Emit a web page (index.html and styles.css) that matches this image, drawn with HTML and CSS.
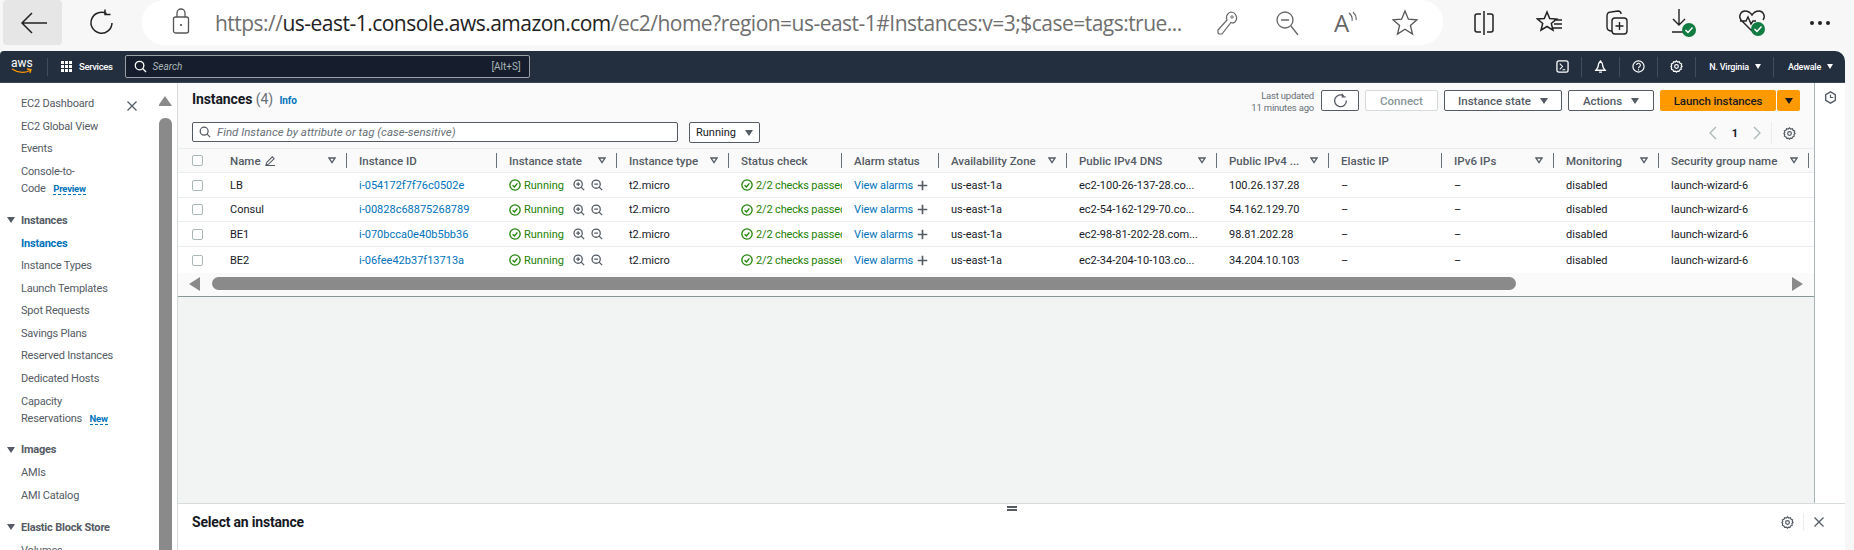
FILE: index.html
```html
<!DOCTYPE html>
<html lang="en">
<head>
  <meta charset="UTF-8" />
  <title>Instances | EC2 | us-east-1</title>
  <link rel="stylesheet" href="styles.css">
</head>
<body>
  <svg class="defs" width="0" height="0">
    <symbol id="ok" viewBox="0 0 14 14"><circle cx="7" cy="7" r="6" fill="none" stroke="currentColor" stroke-width="1.500"/><path d="M4.200 7.200l2.100 2.100 3.500-4.200" fill="none" stroke="currentColor" stroke-width="1.500"/></symbol>
    <symbol id="zin" viewBox="0 0 14 14"><circle cx="6" cy="6" r="4.800" fill="none" stroke="currentColor" stroke-width="1.500"/><path d="M9.500 9.500L13 13M3.800 6h4.400M6 3.800v4.400" fill="none" stroke="currentColor" stroke-width="1.500"/></symbol>
    <symbol id="zout" viewBox="0 0 14 14"><circle cx="6" cy="6" r="4.800" fill="none" stroke="currentColor" stroke-width="1.500"/><path d="M9.500 9.500L13 13M3.800 6h4.400" fill="none" stroke="currentColor" stroke-width="1.500"/></symbol>
    <symbol id="plus" viewBox="0 0 12 12"><path d="M6 .8v10.400M.8 6h10.400" fill="none" stroke="currentColor" stroke-width="1.800"/></symbol>
    <symbol id="sort" viewBox="0 0 8 7"><path d="M1 1h6L4 5.600z" fill="none" stroke="currentColor" stroke-width="1.300"/></symbol>
    <symbol id="gear" viewBox="0 0 14 14"><path d="M7 1l1.300 1.200 1.800-.3.700 1.700 1.700.7-.3 1.800L13 7l-1.200 1.100.3 1.800-1.700.7-.7 1.700-1.800-.3L7 13l-1.300-1-1.800.3-.7-1.700-1.700-.7.3-1.800L1 7l.8-.9-.3-1.800 1.700-.7.7-1.700 1.800.3z" fill="none" stroke="currentColor" stroke-width="1.300"/><circle cx="7" cy="7" r="2" fill="none" stroke="currentColor" stroke-width="1.300"/></symbol>
    <symbol id="close" viewBox="0 0 12 12"><path d="M1.500 1.500l9 9M10.500 1.500l-9 9" fill="none" stroke="currentColor" stroke-width="1.300"/></symbol>
  </svg>

  <header class="browser">
    <button class="back">
      <svg width="28" height="24" viewBox="0 0 28 24"><path d="M27 12H3M12 2L2 12l10 10" fill="none" stroke="#222" stroke-width="1.500"/></svg>
    </button>
    <svg class="reload" width="26" height="28" viewBox="0 0 26 28"><path d="M17.500 4.500A10.500 10.500 0 1 0 23 14M16 .5v5h5.500" fill="none" stroke="#222" stroke-width="1.500"/></svg>
    <div class="urlbar">
      <svg class="lock" width="18" height="28" viewBox="0 0 18 28"><rect x="1.500" y="10" width="15" height="16" rx="2" fill="none" stroke="#555" stroke-width="1.300"/><path d="M5 10V6a4 4 0 0 1 8 0v4" fill="none" stroke="#555" stroke-width="1.300"/><circle cx="9" cy="18" r="1.100" fill="#555"/></svg>
      <div class="url"><span>https://</span><b>us-east-1.console.aws.amazon.com</b><span>/ec2/home?region=us-east-1#Instances:v=3;$case=tags:true...</span></div>
      <div class="url-tools">
        <svg width="24" height="28" viewBox="0 0 24 28"><path d="M15 3a6 6 0 0 1 4 10l-2 1-2-.5L6 25H3l-1-1v-3l9-10-.500-2A6 6 0 0 1 15 3z" fill="none" stroke="#666" stroke-width="1.200"/><circle cx="16" cy="8" r="1.200" fill="none" stroke="#666"/></svg>
        <svg width="24" height="28" viewBox="0 0 24 28"><circle cx="10" cy="11" r="8" fill="none" stroke="#666" stroke-width="1.300"/><path d="M16 17l7 9M6 11h8" fill="none" stroke="#666" stroke-width="1.300"/></svg>
        <span class="read">A<svg width="10" height="14" viewBox="0 0 10 14"><path d="M2 2q4 3 3 8M6 1q4 4 3 8" fill="none" stroke="#666" stroke-width="1.100"/></svg></span>
        <svg width="26" height="28" viewBox="0 0 26 28"><path d="M13 2l3.400 8.200 8.600.6-6.600 5.600 2.100 8.600L13 20.300 5.500 25l2.100-8.600L1 10.800l8.600-.6z" fill="none" stroke="#555" stroke-width="1.300"/></svg>
      </div>
    </div>
    <div class="browser-tools">
      <svg width="24" height="24" viewBox="0 0 24 24"><path d="M9 3H5a2 2 0 0 0-2 2v14a2 2 0 0 0 2 2h4M15 3h4a2 2 0 0 1 2 2v14a2 2 0 0 1-2 2h-4M12 0v24" fill="none" stroke="#222" stroke-width="1.500"/></svg>
      <svg width="28" height="26" viewBox="0 0 28 26"><path d="M11 2l2.700 6.500 6.800.500-5.200 4.400 1.700 6.800L11 16.500 5 20.200l1.700-6.800L1.500 9l6.800-.500zM18 10h8M18 14h8M16 18h10" fill="none" stroke="#222" stroke-width="1.500"/></svg>
      <svg width="26" height="28" viewBox="0 0 26 28"><path d="M8 22c-3 0-5-1-5-4V7c0-2 1-4 4-4l7-1c2 0 3 1 3 3" fill="none" stroke="#222" stroke-width="1.400"/><rect x="8" y="9" width="15" height="16" rx="3" fill="none" stroke="#222" stroke-width="1.400"/><path d="M15.500 13v8M11.500 17h8" fill="none" stroke="#222" stroke-width="1.400"/></svg>
      <svg width="28" height="30" viewBox="0 0 28 30"><path d="M9 1v16M3 11l6 6 6-6M2 24h13" fill="none" stroke="#222" stroke-width="1.400"/><circle cx="19" cy="22" r="7" fill="#107c41"/><path d="M15.500 22l2.500 2.500 4.500-5" fill="none" stroke="#fff" stroke-width="1.500"/></svg>
      <svg width="30" height="30" viewBox="0 0 30 30"><path d="M14 23L3 12c-3-4 0-9 4-9 3 0 5 1 7 4 2-3 4-4 7-4 4 0 7 5 4 9M2 13h6l2-4 3 7 2-3h3" fill="none" stroke="#222" stroke-width="1.400"/><circle cx="20" cy="21" r="7" fill="#107c41"/><path d="M16.500 21l2.500 2.500 4.500-5" fill="none" stroke="#fff" stroke-width="1.500"/></svg>
      <span class="dots"><i></i><i></i><i></i></span>
    </div>
  </header>

  <nav class="topnav">
    <div class="aws-logo">aws
      <svg width="22" height="7" viewBox="0 0 22 7"><path d="M1 1q9 6 18 1.500M16 1l4 .5-1 3.500" fill="none" stroke="#f90" stroke-width="1.300"/></svg>
    </div>
    <span class="nav-sep"></span>
    <span class="grid-dots"><i></i><i></i><i></i><i></i><i></i><i></i><i></i><i></i><i></i></span>
    <span class="nav-label services">Services</span>
    <div class="nav-search">
      <svg width="13" height="13" viewBox="0 0 14 14"><circle cx="6" cy="6" r="4.600" fill="none" stroke="#fff" stroke-width="1.400"/><path d="M9.500 9.500L13 13" stroke="#fff" stroke-width="1.400"/></svg>
      <em>Search</em>
      <span>[Alt+S]</span>
    </div>
    <div class="nav-right">
      <span class="nav-item"><svg width="13" height="13" viewBox="0 0 14 14"><rect x="1" y="1" width="12" height="12" rx="2" fill="none" stroke="#fff" stroke-width="1.400"/><path d="M4 4l3 3-3 3M7 10.500h3" fill="none" stroke="#fff" stroke-width="1.100"/></svg></span>
      <span class="nav-item"><svg width="13" height="14" viewBox="0 0 14 15"><path d="M7 1c-2 2-2.500 3-2.500 5.500 0 2-1.500 3-2.500 4.500h10c-1-1.500-2.500-2.500-2.500-4.500C9.500 4 9 3 7 1zM5.500 13h3" fill="none" stroke="#fff" stroke-width="1.500"/></svg></span>
      <span class="nav-item"><svg width="13" height="13" viewBox="0 0 14 14"><circle cx="7" cy="7" r="6" fill="none" stroke="#fff" stroke-width="1.300"/><path d="M5 5.500a2 2 0 1 1 3 1.700c-.8.500-1 1-1 1.800M7 10v1.200" fill="none" stroke="#fff" stroke-width="1.200"/></svg></span>
      <span class="nav-item"><svg width="13" height="13"><use href="#gear"/></svg></span>
      <span class="nav-item region">N. Virginia<i class="caret"></i></span>
      <span class="nav-item user">Adewale<i class="caret"></i></span>
    </div>
  </nav>

  <div class="console">
    <aside class="sidebar">
      <svg class="side-close"><use href="#close"/></svg>
      <a class="side-link">EC2 Dashboard</a>
      <a class="side-link">EC2 Global View</a>
      <a class="side-link">Events</a>
      <a class="side-link two-line">Console-to-<br>Code <span class="tag">Preview</span></a>
      <h4 class="side-head">Instances</h4>
      <a class="side-link active">Instances</a>
      <a class="side-link">Instance Types</a>
      <a class="side-link">Launch Templates</a>
      <a class="side-link">Spot Requests</a>
      <a class="side-link">Savings Plans</a>
      <a class="side-link">Reserved Instances</a>
      <a class="side-link">Dedicated Hosts</a>
      <a class="side-link two-line">Capacity<br>Reservations <span class="tag">New</span></a>
      <h4 class="side-head">Images</h4>
      <a class="side-link">AMIs</a>
      <a class="side-link">AMI Catalog</a>
      <h4 class="side-head">Elastic Block Store</h4>
      <a class="side-link">Volumes</a>
    </aside>
    <div class="side-scroll">
      <i class="arrow-up"></i>
      <i class="side-thumb"></i>
    </div>

    <div class="workspace">
      <div class="upper">
        <main class="content">
          <section class="instances">
            <div class="toolbar">
              <h2>Instances <span>(4)</span> <a>Info</a></h2>
              <div class="updated">Last updated<br>11 minutes ago</div>
              <button class="btn refresh"><svg width="15" height="15" viewBox="0 0 16 16"><path d="M11.500 3A6.300 6.300 0 1 0 14.300 8M10 .8v3.400h3.400" fill="none" stroke="#545b64" stroke-width="1.400"/></svg></button>
              <button class="btn disabled connect">Connect</button>
              <button class="btn state">Instance state<i class="drop"></i></button>
              <button class="btn actions">Actions<i class="drop"></i></button>
              <button class="btn primary launch">Launch instances</button>
              <button class="btn primary launch-drop"><i class="drop dark"></i></button>
            </div>
            <div class="filterbar">
              <div class="filter">
                <svg width="12" height="12" viewBox="0 0 14 14"><circle cx="6" cy="6" r="4.600" fill="none" stroke="#545b64" stroke-width="1.500"/><path d="M9.500 9.500L13 13" stroke="#545b64" stroke-width="1.500"/></svg>
                <em>Find Instance by attribute or tag (case-sensitive)</em>
              </div>
              <button class="btn running">Running<i class="drop"></i></button>
              <div class="pager">
                <svg width="8" height="14" viewBox="0 0 8 14"><path d="M7 1L1 7l6 6" fill="none" stroke="#aab7b8" stroke-width="1.300"/></svg>
                <b>1</b>
                <svg width="8" height="14" viewBox="0 0 8 14"><path d="M1 1l6 6-6 6" fill="none" stroke="#aab7b8" stroke-width="1.300"/></svg>
                <span class="pager-sep"></span>
                <svg class="pager-gear" width="13" height="13"><use href="#gear"/></svg>
              </div>
            </div>

            <div class="tbl">
              <div class="tr thead">
                <div class="th check"><i class="box"></i></div>
                <div class="th">Name <svg class="pencil" width="11" height="11" viewBox="0 0 12 12"><path d="M1 11l1-3 6-6 2 2-6 6zM1 11.500h10" fill="none" stroke="#545b64" stroke-width="1.100"/></svg><svg class="sort"><use href="#sort"/></svg></div>
                <div class="th">Instance ID</div>
                <div class="th">Instance state<svg class="sort"><use href="#sort"/></svg></div>
                <div class="th">Instance type<svg class="sort"><use href="#sort"/></svg></div>
                <div class="th">Status check</div>
                <div class="th">Alarm status</div>
                <div class="th">Availability Zone<svg class="sort"><use href="#sort"/></svg></div>
                <div class="th">Public IPv4 DNS<svg class="sort"><use href="#sort"/></svg></div>
                <div class="th">Public IPv4 ...<svg class="sort"><use href="#sort"/></svg></div>
                <div class="th">Elastic IP</div>
                <div class="th">IPv6 IPs<svg class="sort"><use href="#sort"/></svg></div>
                <div class="th">Monitoring<svg class="sort"><use href="#sort"/></svg></div>
                <div class="th">Security group name<svg class="sort"><use href="#sort"/></svg></div>
              </div>

              <div class="tr">
                <div class="td check"><i class="box"></i></div>
                <div class="td">LB</div>
                <div class="td"><a>i-054172f7f76c0502e</a></div>
                <div class="td state-cell ok"><svg class="ok-icon"><use href="#ok"/></svg>Running<svg class="zoom first"><use href="#zin"/></svg><svg class="zoom"><use href="#zout"/></svg></div>
                <div class="td">t2.micro</div>
                <div class="td ok clip"><svg class="ok-icon"><use href="#ok"/></svg>2/2 checks passed</div>
                <div class="td"><a class="alarms">View alarms</a><svg class="plus"><use href="#plus"/></svg></div>
                <div class="td">us-east-1a</div>
                <div class="td">ec2-100-26-137-28.co...</div>
                <div class="td">100.26.137.28</div>
                <div class="td">–</div>
                <div class="td">–</div>
                <div class="td">disabled</div>
                <div class="td">launch-wizard-6</div>
              </div>
              <div class="tr short">
                <div class="td check"><i class="box"></i></div>
                <div class="td">Consul</div>
                <div class="td"><a>i-00828c68875268789</a></div>
                <div class="td state-cell ok"><svg class="ok-icon"><use href="#ok"/></svg>Running<svg class="zoom first"><use href="#zin"/></svg><svg class="zoom"><use href="#zout"/></svg></div>
                <div class="td">t2.micro</div>
                <div class="td ok clip"><svg class="ok-icon"><use href="#ok"/></svg>2/2 checks passed</div>
                <div class="td"><a class="alarms">View alarms</a><svg class="plus"><use href="#plus"/></svg></div>
                <div class="td">us-east-1a</div>
                <div class="td">ec2-54-162-129-70.co...</div>
                <div class="td">54.162.129.70</div>
                <div class="td">–</div>
                <div class="td">–</div>
                <div class="td">disabled</div>
                <div class="td">launch-wizard-6</div>
              </div>
              <div class="tr">
                <div class="td check"><i class="box"></i></div>
                <div class="td">BE1</div>
                <div class="td"><a>i-070bcca0e40b5bb36</a></div>
                <div class="td state-cell ok"><svg class="ok-icon"><use href="#ok"/></svg>Running<svg class="zoom first"><use href="#zin"/></svg><svg class="zoom"><use href="#zout"/></svg></div>
                <div class="td">t2.micro</div>
                <div class="td ok clip"><svg class="ok-icon"><use href="#ok"/></svg>2/2 checks passed</div>
                <div class="td"><a class="alarms">View alarms</a><svg class="plus"><use href="#plus"/></svg></div>
                <div class="td">us-east-1a</div>
                <div class="td">ec2-98-81-202-28.com...</div>
                <div class="td">98.81.202.28</div>
                <div class="td">–</div>
                <div class="td">–</div>
                <div class="td">disabled</div>
                <div class="td">launch-wizard-6</div>
              </div>
              <div class="tr last">
                <div class="td check"><i class="box"></i></div>
                <div class="td">BE2</div>
                <div class="td"><a>i-06fee42b37f13713a</a></div>
                <div class="td state-cell ok"><svg class="ok-icon"><use href="#ok"/></svg>Running<svg class="zoom first"><use href="#zin"/></svg><svg class="zoom"><use href="#zout"/></svg></div>
                <div class="td">t2.micro</div>
                <div class="td ok clip"><svg class="ok-icon"><use href="#ok"/></svg>2/2 checks passed</div>
                <div class="td"><a class="alarms">View alarms</a><svg class="plus"><use href="#plus"/></svg></div>
                <div class="td">us-east-1a</div>
                <div class="td">ec2-34-204-10-103.co...</div>
                <div class="td">34.204.10.103</div>
                <div class="td">–</div>
                <div class="td">–</div>
                <div class="td">disabled</div>
                <div class="td">launch-wizard-6</div>
              </div>
            </div>

            <div class="hscroll">
              <i class="arrow-left"></i>
              <i class="hthumb"></i>
              <i class="arrow-right"></i>
            </div>
          </section>
        </main>
        <div class="rail">
          <svg width="13" height="13" viewBox="0 0 14 14"><path d="M7 1l5.200 3v6L7 13l-5.200-3V4z" fill="none" stroke="#545b64" stroke-width="1.500"/><path d="M7 4v3h3" fill="none" stroke="#545b64" stroke-width="1.300"/></svg>
        </div>
      </div>

      <section class="detail">
        <div class="handle"></div>
        <div class="detail-row">
          <h3>Select an instance</h3>
          <svg class="detail-gear" width="13" height="13"><use href="#gear"/></svg>
          <span class="detail-sep"></span>
          <svg class="detail-close" width="12" height="12"><use href="#close"/></svg>
        </div>
      </section>
    </div>
  </div>
</body>
</html>
```

FILE: styles.css
```css
* {
  box-sizing: border-box;
}
html, body {
  margin: 0;
  height: 550px;
  overflow: hidden;
}
body {
  font-family: "Roboto", "Liberation Sans", sans-serif;
  font-size: 11px;
  background: #f7f7f7;
  color: #16191f;
}
svg {
  display: block;
  flex: none;
}
.defs {
  display: none;
}
button {
  font-family: inherit;
}

/* browser chrome */
.browser {
  display: flex;
  align-items: flex-start;
  height: 51px;
}
.back {
  width: 59px;
  height: 45px;
  margin-left: 3px;
  padding: 0 0 0 2px;
  border: 0;
  border-radius: 4px;
  background: #e6e6e6;
  display: flex;
  align-items: center;
  justify-content: center;
}
.reload {
  margin: 9px 0 0 27px;
}
.urlbar {
  display: flex;
  align-items: center;
  width: 1301px;
  height: 45px;
  margin-left: 27px;
  padding-left: 30px;
  background: #fff;
  border-radius: 22px;
}
.lock {
  margin-top: -3px;
}
.url {
  margin-left: 25px;
  width: 975px;
  font-family: "Open Sans", sans-serif;
  font-size: 21px;
  letter-spacing: -0.52px;
  color: #6f6f6f;
  white-space: nowrap;
}
.url b {
  font-weight: 400;
  color: #222;
}
.url-tools {
  display: flex;
  align-items: center;
  gap: 35px;
  margin-left: 26px;
}
.read {
  display: flex;
  align-items: flex-start;
  font-family: "Open Sans", sans-serif;
  font-size: 24px;
  color: #666;
}
.read svg {
  margin: 5px 0 0 -2px;
}
.browser-tools {
  display: flex;
  align-items: center;
  gap: 40px;
  height: 45px;
  margin-left: 29px;
}
.dots {
  display: flex;
  gap: 4px;
  margin-left: 2px;
}
.dots i {
  width: 4px;
  height: 4px;
  border-radius: 50%;
  background: #222;
}

/* aws top bar */
.topnav {
  display: flex;
  align-items: center;
  width: 1845px;
  height: 32px;
  padding-left: 11px;
  background: #232f3e;
  border-top-right-radius: 10px;
  border-top-left-radius: 4px;
  border-bottom: 1px solid #3b4653;
  color: #fff;
}
.aws-logo {
  width: 23px;
  font-size: 12px;
  line-height: 9px;
}
.nav-sep {
  width: 1px;
  height: 18px;
  margin-left: 13px;
  background: #414d5c;
}
.grid-dots {
  display: grid;
  grid-template-columns: repeat(3, 3px);
  gap: 1px;
  margin-left: 13px;
}
.grid-dots i {
  height: 3px;
  background: #fff;
}
.nav-label {
  font-size: 9.500px;
  letter-spacing: -0.35px;
  font-weight: 500;
}
.services {
  margin-left: 7px;
}
.nav-search {
  display: flex;
  align-items: center;
  width: 405px;
  height: 23px;
  margin-left: 12px;
  padding: 0 8px 0 8px;
  background: #161e2d;
  border: 1px solid #9aa0a6;
  border-radius: 2px;
  font-size: 10px;
  color: #aab7b8;
}
.nav-search em {
  margin-left: 6px;
  flex: 1;
}
.nav-right {
  display: flex;
  align-items: center;
  margin-left: auto;
  height: 100%;
}
.nav-item {
  display: flex;
  align-items: center;
  height: 20px;
  padding: 0 12px;
  border-left: 1px solid #414d5c;
  font-size: 9px;
  letter-spacing: -0.2px;
  font-weight: 500;
}
.nav-item:first-child {
  border-left: 0;
}
.region {
  padding-left: 13px;
}
.user {
  padding-left: 14px;
}
.caret {
  width: 0;
  height: 0;
  margin-left: 6px;
  border: 3.500px solid transparent;
  border-top: 5px solid #fff;
  border-bottom: 0;
}

/* page */
.console {
  display: flex;
  width: 1845px;
  height: 467px;
  background: #fff;
}
.sidebar {
  width: 159px;
  padding-top: 10px;
  overflow: hidden;
  color: #545b64;
  letter-spacing: -0.2px;
  position: relative;
}
.side-close {
  position: absolute;
  top: 17px;
  left: 126px;
  width: 12px;
  height: 12px;
  color: #545b64;
}
.side-link {
  display: block;
  height: 22.500px;
  padding-left: 21px;
  line-height: 22.500px;
}
.side-link.two-line {
  height: 39.500px;
  padding-top: 2.750px;
  line-height: 17px;
}
.side-link.active {
  color: #0073bb;
  font-weight: 700;
}
.tag {
  margin-left: 5px;
  font-size: 9.500px;
  font-weight: 700;
  color: #0073bb;
  border-bottom: 1px dashed #0073bb;
}
.side-head {
  display: flex;
  align-items: center;
  height: 22.500px;
  margin: 9px 0 1px;
  padding-left: 7px;
  font-size: 11px;
  font-weight: 700;
  color: #545b64;
}
.side-head::before {
  content: "";
  width: 0;
  height: 0;
  margin-right: 6px;
  border: 4px solid transparent;
  border-top: 6px solid #545b64;
  border-bottom: 0;
}
.side-scroll {
  width: 18px;
  padding-top: 13px;
  overflow: hidden;
}
.arrow-up {
  display: block;
  width: 0;
  height: 0;
  border: 7.500px solid transparent;
  border-bottom: 10px solid #8a8a8a;
  border-top: 0;
  margin-bottom: 12px;
  margin-left: -1px;
}
.side-thumb {
  display: block;
  width: 13px;
  height: 432px;
  background: #8a8a8a;
  border-radius: 6px 6px 0 0;
}
.workspace {
  flex: 1;
  display: flex;
  flex-direction: column;
  min-width: 0;
}
.upper {
  flex: 1;
  display: flex;
  min-height: 0;
}
.content {
  flex: 1;
  min-width: 0;
  background: #f2f3f3;
  border-left: 1px solid #d5dbdb;
  border-right: 1px solid #aab7b8;
}
.rail {
  width: 30px;
  padding: 8px 0 0 9px;
}
.instances {
  height: 214px;
  background: #fafafa;
  border-bottom: 1px solid #879596;
}

/* header toolbar */
.toolbar {
  display: flex;
  align-items: flex-start;
  height: 39px;
  padding: 7px 14px 0 14px;
}
.toolbar h2 {
  flex: 1;
  margin: 1px 0 0;
  font-size: 14px;
  letter-spacing: -0.1px;
  font-weight: 700;
  line-height: 16px;
}
.toolbar h2 span {
  font-weight: 400;
  color: #687078;
}
.toolbar h2 a {
  margin-left: 3px;
  font-size: 10px;
  color: #0073bb;
}
.updated {
  margin: 0 7px 0 0;
  font-size: 9.500px;
  letter-spacing: -0.2px;
  line-height: 12px;
  text-align: right;
  color: #687078;
}
.btn {
  display: flex;
  align-items: center;
  justify-content: center;
  height: 21px;
  padding: 0;
  margin-right: 6px;
  background: #fff;
  border: 1px solid #545b64;
  border-radius: 2px;
  font-size: 11.500px;
  font-weight: 500;
  color: #545b64;
}
.refresh {
  width: 38px;
}
.connect {
  width: 73px;
}
.disabled {
  border-color: #d5dbdb;
  color: #879596;
}
.state {
  width: 118px;
}
.actions {
  width: 86px;
}
.primary {
  background: #ff9900;
  border-color: #ff9900;
  color: #16191f;
}
.launch {
  width: 116px;
  margin-right: 1px;
  letter-spacing: -0.1px;
}
.launch-drop {
  width: 23px;
  margin-right: 0;
}
.drop {
  width: 0;
  height: 0;
  margin-left: 9px;
  border: 4px solid transparent;
  border-top: 6px solid #545b64;
  border-bottom: 0;
}
.drop.dark {
  margin: 0;
  border-top-color: #16191f;
}
.filterbar {
  display: flex;
  align-items: flex-start;
  height: 26px;
  padding-left: 14px;
}
.filter {
  display: flex;
  align-items: center;
  width: 486px;
  height: 20px;
  padding-left: 6px;
  background: #fff;
  border: 1px solid #545b64;
  border-radius: 2px;
  font-size: 11.500px;
  color: #687078;
}
.filter em {
  margin-left: 6px;
}
.running {
  width: 71px;
  margin-left: 11px;
  font-weight: 400;
  font-size: 11px;
  color: #16191f;
}
.pager {
  display: flex;
  align-items: center;
  margin-left: auto;
  height: 22px;
  padding-right: 18px;
  color: #545b64;
}
.pager b {
  margin: 0 15px;
  color: #16191f;
}
.pager-sep {
  width: 1px;
  height: 22px;
  margin: 0 11px 0 10px;
  background: #eaeded;
}

/* table */
.tr {
  display: grid;
  grid-template-columns: 40px 129px 150px 120px 112px 113px 97px 128px 150px 112px 113px 112px 105px 150px;
  height: 25px;
  background: #fff;
  border-bottom: 1px solid #eaeded;
}
.tr.short {
  height: 24px;
}
.tr.last {
  height: 26px;
  border-bottom: 0;
}
.thead {
  background: #fafafa;
  border-top: 1px solid #eaeded;
}
.th {
  display: flex;
  align-items: center;
  padding-left: 12px;
  font-weight: 500;
  font-size: 11.500px;
  color: #545b64;
  white-space: nowrap;
}
.th::after {
  content: "";
  width: 1px;
  height: 15px;
  background: #687078;
}
.th:not(:has(.sort))::after {
  margin-left: auto;
}
.th.check {
  padding-left: 14px;
}
.th.check::after {
  display: none;
}
.pencil {
  margin-left: 4px;
}
.sort {
  width: 8px;
  height: 7px;
  margin: 0 10px 0 auto;
  color: #545b64;
}
.td {
  display: flex;
  align-items: center;
  padding-left: 12px;
  color: #16191f;
  white-space: nowrap;
  min-width: 0;
  overflow: hidden;
}
.td.check {
  padding-left: 14px;
}
.box {
  display: block;
  width: 11px;
  height: 11px;
  background: #fff;
  border: 1px solid #aab7b8;
  border-radius: 2px;
}
.td a {
  color: #0073bb;
}
.td .alarms {
  letter-spacing: -0.1px;
}
.td.ok {
  color: #1d8102;
}
.td.clip {
  letter-spacing: -0.15px;
}
.ok-icon {
  width: 12px;
  height: 12px;
  margin-right: 3px;
}
.zoom {
  width: 12px;
  height: 12px;
  margin-left: 6px;
  color: #545b64;
}
.zoom.first {
  margin-left: 9px;
}
.plus {
  width: 11px;
  height: 11px;
  margin-left: 4px;
  color: #545b64;
}
.hscroll {
  display: flex;
  align-items: center;
  height: 22px;
  padding: 0 11px 1px 11px;
}
.arrow-left {
  width: 0;
  height: 0;
  border: 7px solid transparent;
  border-right: 11px solid #8a8a8a;
  border-left: 0;
}
.hthumb {
  width: 1304px;
  height: 13px;
  margin-left: 12px;
  background: #8a8a8a;
  border-radius: 7px;
}
.arrow-right {
  width: 0;
  height: 0;
  margin-left: auto;
  border: 7px solid transparent;
  border-left: 11px solid #8a8a8a;
  border-right: 0;
}

/* split panel */
.detail {
  height: 47px;
  background: #fff;
  border-top: 1px solid #d5dbdb;
  border-left: 1px solid #d5dbdb;
}
.handle {
  width: 10px;
  height: 5px;
  margin: 2px auto 0;
  border-top: 2px solid #545b64;
  border-bottom: 2px solid #545b64;
}
.detail-row {
  display: flex;
  align-items: center;
  height: 24px;
  margin-top: -1px;
  padding: 0 20px 0 14px;
}
.detail-row h3 {
  flex: 1;
  margin: 0;
  font-size: 14px;
  letter-spacing: -0.2px;
  font-weight: 700;
}
.detail-gear {
  color: #545b64;
}
.detail-sep {
  width: 1px;
  height: 18px;
  margin: 0 9px;
  background: #eaeded;
}
.detail-close {
  color: #545b64;
}
```
